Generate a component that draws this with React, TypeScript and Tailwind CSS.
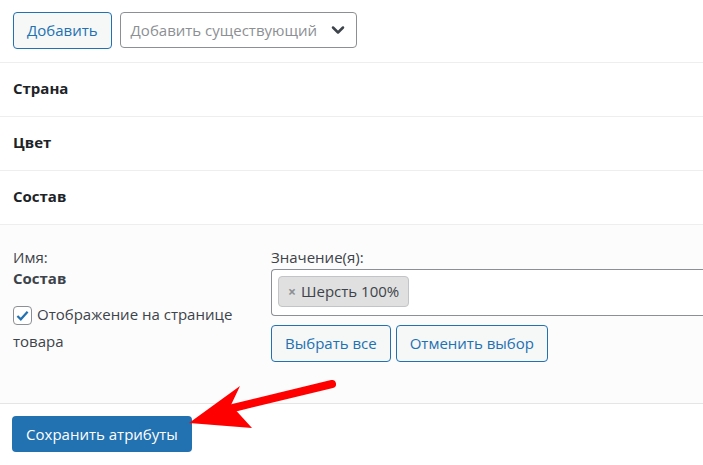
import { ChevronDown } from "lucide-react";

function Row({ label }: { label: string }) {
  return (
    <div className="flex h-[54px] items-center border-b border-[#eeeeee] px-[13px] pb-[2px] text-[15px] font-bold text-[#1d2327]">
      {label}
    </div>
  );
}

function OutlineButton({ children }: { children: React.ReactNode }) {
  return (
    <button className="h-[37px] rounded-[4px] border border-[#2271b1] bg-[#f6f7f7] px-[13px] text-[15px] text-[#2271b1]">
      {children}
    </button>
  );
}

export default function App() {
  return (
    <div
      className="relative h-[465px] w-full overflow-hidden bg-white text-[#3c434a]"
      style={{ fontFamily: '"Open Sans", "Noto Sans", sans-serif' }}
    >
      {/* toolbar */}
      <div className="flex gap-2 border-b border-[#eeeeee] px-[13px] pb-[13px] pt-3">
        <OutlineButton>Добавить</OutlineButton>
        <div className="flex h-[36px] w-[237px] items-center justify-between rounded-[4px] border border-[#8c8f94] pl-[10px] pr-[8px] text-[15px] text-[#8c8f94]">
          <span>Добавить существующий</span>
          <ChevronDown size={20} strokeWidth={3} className="text-[#3c434a]" />
        </div>
      </div>

      <Row label="Страна" />
      <Row label="Цвет" />
      <Row label="Состав" />

      {/* expanded attribute */}
      <div className="flex h-[179px] border-b border-[#e5e5e5] bg-[#fcfcfc] pl-[13px] pt-[22px] text-[15px]">
        <div className="w-[258px] pr-4">
          <div className="leading-[21px]">Имя:</div>
          <div className="font-bold leading-[21px]">Состав</div>
          <label className="mt-[12px] block w-[240px] leading-[27px]">
            <span className="mr-[5px] inline-flex h-[19px] w-[19px] translate-y-[4px] items-center justify-center rounded-[4px] border border-[#8c8f94] bg-white align-baseline">
              <svg viewBox="0 0 20 20" className="h-[17px] w-[17px]">
                <path d="M4 10.5l4 4 8-9" fill="none" stroke="#2271b1" strokeWidth="2.6" />
              </svg>
            </span>
            Отображение на странице товара
          </label>
        </div>
        <div className="flex-1">
          <div className="leading-[21px]">Значение(я):</div>
          <div className="mt-[1px] h-[47px] rounded-l-[4px] border border-r-0 border-[#8c8f94] bg-white px-[6px] pt-[6px]">
            <span className="inline-flex h-[31px] items-center gap-[5px] rounded-[4px] border border-[#c3c4c7] bg-[#e0e0e0] px-[9px]">
              <span className="text-[14px] font-bold text-[#8c8f94]">×</span>
              <span>Шерсть 100%</span>
            </span>
          </div>
          <div className="mt-[9px] flex gap-[5px]">
            <OutlineButton>Выбрать все</OutlineButton>
            <OutlineButton>Отменить выбор</OutlineButton>
          </div>
        </div>
      </div>

      {/* footer */}
      <div className="px-3 pt-[12px]">
        <button className="h-[36px] w-[180px] rounded-[4px] bg-[#2271b1] text-[15px] text-white">
          Сохранить атрибуты
        </button>
      </div>

      {/* annotation arrow */}
      <svg className="pointer-events-none absolute left-0 top-0" width="703" height="465">
        <line x1="332" y1="384" x2="225" y2="410" stroke="#ff0000" strokeWidth="8" strokeLinecap="round" />
        <polygon points="189,423 240,386 231,405 252,428" fill="#ff0000" />
      </svg>
    </div>
  );
}
